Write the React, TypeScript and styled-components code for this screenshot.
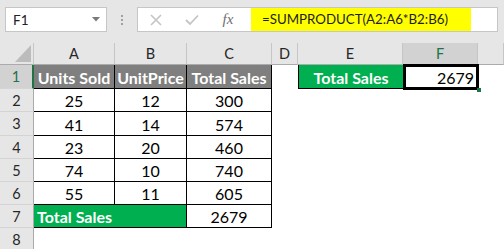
import { Fragment } from "react";
import styled, { createGlobalStyle } from "styled-components";

const GlobalStyle = createGlobalStyle`
  html, body {
    margin: 0;
    padding: 0;
    background: #fff;
  }
  body {
    font-family: Lato, "Open Sans", "Liberation Sans", sans-serif;
  }
`;

const Page = styled.div`
  width: 504px;
  height: 249px;
  overflow: hidden;
  background: #fff;
`;

const Toolbar = styled.div`
  height: 43px;
  box-sizing: border-box;
  padding: 7px 0 0 5px;
  background: #e6e6e6;
  display: flex;
  align-items: flex-start;
`;

const NameBox = styled.div`
  width: 102px;
  height: 25px;
  box-sizing: border-box;
  border: 1px solid #c6c6c6;
  background: #fff;
  display: flex;
  align-items: center;
  justify-content: space-between;
  padding: 0 6px 0 7px;
  font-size: 13.5px;
  color: #222;
`;

const Grip = styled.div`
  width: 30px;
  height: 25px;
  display: flex;
  flex-direction: column;
  align-items: center;
  justify-content: center;
  gap: 2px;

  span {
    width: 2px;
    height: 2px;
    background: #a0a0a0;
  }
`;

const FormulaBox = styled.div`
  width: 361px;
  height: 25px;
  box-sizing: border-box;
  border: 1px solid #c6c6c6;
  background: #fff;
  display: flex;
`;

const BarButtons = styled.div`
  width: 113px;
  display: flex;
  align-items: center;
`;

const BarButton = styled.div`
  width: 36px;
  height: 23px;
  display: flex;
  align-items: center;
  justify-content: center;
`;

const Fx = styled.span`
  font-family: "Liberation Serif", serif;
  font-style: italic;
  font-size: 15px;
  color: #6f6f6f;
`;

const FormulaInput = styled.div`
  width: 220px;
  height: 23px;
  background: #ffff00;
  box-sizing: border-box;
  padding-left: 11px;
  line-height: 23px;
  font-size: 13.3px;
  color: #1e1e1e;
  white-space: nowrap;
`;

const Sheet = styled.div`
  display: grid;
  grid-template-columns: 34px 81px 72px 85px 26px 105px 75px 26px;
  grid-template-rows: 22px 24px 23px 24px 23px 23px 23px 23px 23px;
`;

const Corner = styled.div`
  background: #e6e6e6;
  box-sizing: border-box;
  border-right: 1px solid #c6c6c6;
  border-bottom: 1px solid #ababab;
  display: flex;
  align-items: flex-end;
  justify-content: flex-end;
  padding: 0 2px 2px 0;
`;

const ColHead = styled.div<{ $selected?: boolean }>`
  background: ${(p) => (p.$selected ? "#d2d2d2" : "#e6e6e6")};
  color: ${(p) => (p.$selected ? "#217346" : "#262626")};
  box-sizing: border-box;
  border-right: 1px solid #c6c6c6;
  border-bottom: 1px solid #ababab;
  display: flex;
  align-items: center;
  justify-content: center;
  font-size: 14.5px;
`;

const RowHead = styled.div<{ $selected?: boolean }>`
  background: ${(p) => (p.$selected ? "#d2d2d2" : "#e6e6e6")};
  color: ${(p) => (p.$selected ? "#217346" : "#262626")};
  box-sizing: border-box;
  border-right: ${(p) => (p.$selected ? "2px solid #217346" : "1px solid #ababab")};
  border-bottom: 1px solid #d4d4d4;
  display: flex;
  align-items: center;
  justify-content: center;
  font-size: 14.5px;
`;

type Tone = "plain" | "head" | "green";

const toneBg: Record<Tone, string> = {
  plain: "#fff",
  head: "#7f7f7f",
  green: "#00b050",
};

const Cell = styled.div<{ $tone?: Tone; $boxed?: boolean; $align?: string; $span?: number }>`
  grid-column: span ${(p) => p.$span ?? 1};
  background: ${(p) => toneBg[p.$tone ?? "plain"]};
  color: ${(p) => (p.$tone && p.$tone !== "plain" ? "#fff" : "#000")};
  font-weight: ${(p) => (p.$tone && p.$tone !== "plain" ? 700 : 400)};
  box-sizing: border-box;
  border-right: ${(p) => (p.$boxed ? "1px solid #000" : "none")};
  border-bottom: ${(p) => (p.$boxed ? "1px solid #000" : "none")};
  display: flex;
  align-items: center;
  justify-content: ${(p) => p.$align ?? "center"};
  padding: 1px 3px 0;
  font-size: 16px;
  white-space: nowrap;
`;

const SideCell = styled(Cell)`
  border-left: 1px solid #000;
  border-bottom: 1px solid #000;
`;

const ActiveCell = styled(Cell)`
  position: relative;
  justify-content: flex-end;
  padding-right: 4px;

  &::after {
    content: "";
    position: absolute;
    top: -1px;
    left: 0;
    right: -1px;
    bottom: -1px;
    border: 3px solid #000;
  }

  &::before {
    content: "";
    position: absolute;
    right: -3px;
    bottom: -3px;
    width: 4px;
    height: 4px;
    background: #217346;
    z-index: 1;
  }
`;

const columns = ["A", "B", "C", "D", "E", "F", ""];

const data = [
  [25, 12, 300],
  [41, 14, 574],
  [23, 20, 460],
  [74, 10, 740],
  [55, 11, 605],
];

const Blanks = ({ n }: { n: number }) => (
  <>
    {Array.from({ length: n }).map((_, i) => (
      <Cell key={i} />
    ))}
  </>
);

const App = () => {
  return (
    <Page>
      <GlobalStyle />
      <Toolbar>
        <NameBox>
          <span>F1</span>
          <svg width="8" height="5" viewBox="0 0 8 5">
            <polygon points="0,0 8,0 4,4.5" fill="#7a7a7a" />
          </svg>
        </NameBox>
        <Grip>
          <span />
          <span />
          <span />
        </Grip>
        <FormulaBox>
          <BarButtons>
            <BarButton>
              <svg width="12" height="12" viewBox="0 0 12 12">
                <path d="M1 1 L11 11 M11 1 L1 11" stroke="#c4c4c4" strokeWidth="1.6" />
              </svg>
            </BarButton>
            <BarButton>
              <svg width="14" height="12" viewBox="0 0 14 12">
                <path d="M1 6 L5 10 L13 1.5" stroke="#c4c4c4" strokeWidth="1.8" fill="none" />
              </svg>
            </BarButton>
            <BarButton>
              <Fx>fx</Fx>
            </BarButton>
          </BarButtons>
          <FormulaInput>=SUMPRODUCT(A2:A6*B2:B6)</FormulaInput>
        </FormulaBox>
      </Toolbar>

      <Sheet>
        <Corner>
          <svg width="16" height="17" viewBox="0 0 16 17">
            <polygon points="16,0 16,17 0,17" fill="#bcbcbc" />
          </svg>
        </Corner>
        {columns.map((c, i) => (
          <ColHead key={i} $selected={c === "F"}>
            {c}
          </ColHead>
        ))}

        <RowHead $selected>1</RowHead>
        <Cell $tone="head" $boxed>Units Sold</Cell>
        <Cell $tone="head" $boxed>UnitPrice</Cell>
        <Cell $tone="head" $boxed>Total Sales</Cell>
        <Cell />
        <SideCell $tone="green">Total Sales</SideCell>
        <ActiveCell>2679</ActiveCell>
        <Cell />

        {data.map((row, r) => (
          <Fragment key={r}>
            <RowHead>{r + 2}</RowHead>
            {row.map((v, i) => (
              <Cell key={i} $boxed>
                {v}
              </Cell>
            ))}
            <Blanks n={4} />
          </Fragment>
        ))}

        <RowHead>7</RowHead>
        <Cell $tone="green" $boxed $span={2} $align="flex-start">
          Total Sales
        </Cell>
        <Cell $boxed>2679</Cell>
        <Blanks n={4} />

        <RowHead>8</RowHead>
        <Blanks n={7} />
      </Sheet>
    </Page>
  );
};

export default App;
